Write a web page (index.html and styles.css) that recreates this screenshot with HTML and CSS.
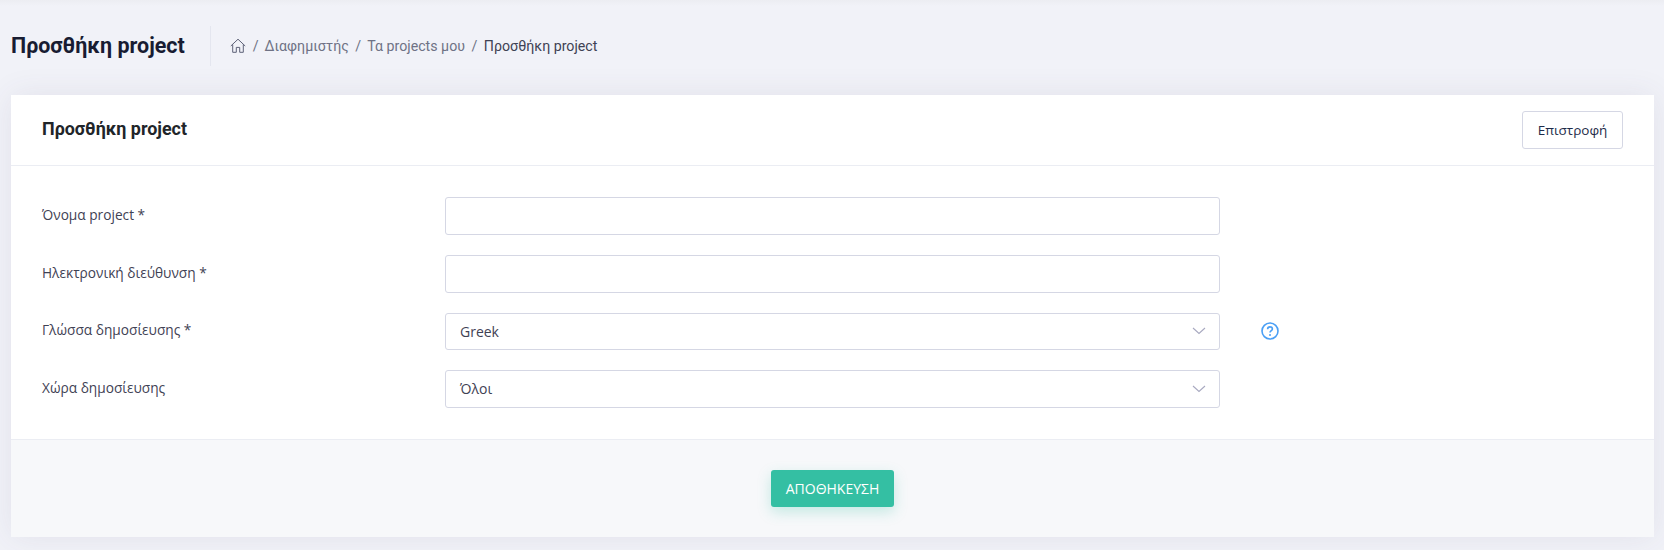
FILE: index.html
```html
<!DOCTYPE html>
<html lang="el">
<head>
<meta charset="utf-8">
<title>Προσθήκη project</title>
<link rel="stylesheet" href="styles.css">
</head>
<body>
<header class="subheader">
  <h1 class="page-title">Προσθήκη project</h1>
  <nav class="crumbs">
    <svg class="home-icon" viewBox="0 0 16 16" aria-hidden="true"><path d="M0.8 8 L8 1.2 L15.2 8 M2.7 6.4 V14.3 H6.3 V9.4 H9.7 V14.3 H13.3 V6.4"/></svg>
    <span class="sep">/</span><span class="crumb">Διαφημιστής</span>
    <span class="sep">/</span><span class="crumb">Τα projects μου</span>
    <span class="sep">/</span><span class="crumb current">Προσθήκη project</span>
  </nav>
</header>
<main class="card">
  <div class="card-head">
    <h2 class="card-title">Προσθήκη project</h2>
    <button class="btn-back" type="button">Επιστροφή</button>
  </div>
  <form class="card-body">
    <label class="field-label">Όνομα project *</label>
    <div class="control"></div>
    <span></span>
    <label class="field-label">Ηλεκτρονική διεύθυνση *</label>
    <div class="control"></div>
    <span></span>
    <label class="field-label">Γλώσσα δημοσίευσης *</label>
    <div class="control select">Greek<svg class="chevron" viewBox="0 0 14 8" aria-hidden="true"><path d="M1 1 L7 6.5 L13 1"/></svg></div>
    <svg class="help" viewBox="0 0 18 18" aria-hidden="true"><circle cx="9" cy="9" r="8"/><path d="M6.6 7.2 C6.6 5.7 7.7 4.9 9 4.9 C10.4 4.9 11.4 5.8 11.4 7 C11.4 8.6 9 8.7 9 10.6"/><circle class="dot" cx="9" cy="13" r="1"/></svg>
    <label class="field-label">Χώρα δημοσίευσης</label>
    <div class="control select">Όλοι<svg class="chevron" viewBox="0 0 14 8" aria-hidden="true"><path d="M1 1 L7 6.5 L13 1"/></svg></div>
    <span></span>
  </form>
  <div class="card-foot">
    <button class="btn-save" type="button">ΑΠΟΘΗΚΕΥΣΗ</button>
  </div>
</main>
</body>
</html>
```
FILE: styles.css
```css
* { box-sizing: border-box; }
html, body { margin: 0; height: 550px; overflow: hidden; }
body {
  background: linear-gradient(#ecedf2, #f1f2f8 6px);
  font-family: "Open Sans", sans-serif;
  font-size: 14px;
  color: #3f4254;
  padding: 0 10px 0 11px;
}
.subheader {
  height: 95px;
  display: flex;
  align-items: center;
  padding-bottom: 4px;
}
.page-title {
  margin: 0;
  font-family: Roboto, sans-serif;
  font-size: 21.45px;
  font-weight: 700;
  color: #181c32;
  padding-right: 25px;
}
.crumbs {
  height: 40px;
  border-left: 1px solid #e4e6ef;
  padding-left: 19px;
  display: flex;
  align-items: center;
  gap: 6px;
  font-family: Roboto, sans-serif;
  font-size: 14.2px;
  color: #6f7285;
}
.home-icon { width: 16px; height: 16px; fill: none; stroke: #5e6278; stroke-width: 1; margin-right: 1px; }
.crumb { margin-right: 0.5px; }
.crumb.current { color: #3f4254; margin-left: 0.5px; }
.card {
  background: #fff;
  box-shadow: 0 0 30px rgba(82, 63, 105, 0.09);
  height: 442px;
}
.card-head {
  height: 71px;
  border-bottom: 1px solid #ebedf3;
  display: flex;
  align-items: center;
  justify-content: space-between;
  padding: 0 31px;
}
.card-title {
  margin: 0 0 4px;
  font-family: Roboto, sans-serif;
  font-size: 17.9px;
  font-weight: 700;
  color: #212529;
}
.btn-back {
  width: 101px;
  height: 38px;
  background: #fff;
  border: 1px solid #d5d7e4;
  border-radius: 3px;
  font-family: "Open Sans", sans-serif;
  font-size: 13.5px;
  color: #1e2b4a;
  padding: 0;
}
.card-body {
  height: 273px;
  padding: 31.4px 0 0 31px;
  display: grid;
  grid-template-columns: 403px 775px 100px;
  grid-auto-rows: 37.6px;
  row-gap: 20px;
  align-items: center;
}
.field-label { font-size: 13.7px; color: #3f4254; padding-bottom: 3px; }
.control {
  height: 37.6px;
  border: 1px solid #d5d7e4;
  border-radius: 3px;
  background: #fff;
  font-size: 14px;
  color: #3f4254;
  padding: 0 14px;
  display: flex;
  align-items: center;
  justify-content: space-between;
}
.chevron { width: 14px; height: 8px; fill: none; stroke: #a8a9c0; stroke-width: 1.1; margin-right: -1px; }
.help { width: 18px; height: 18px; margin-left: 41px; fill: none; stroke: #4a9ff5; stroke-width: 1.6; }
.help .dot { fill: #4a9ff5; stroke: none; }
.card-foot {
  height: 98px;
  border-top: 1px solid #ebedf3;
  background: #f7f8fa;
  display: flex;
  justify-content: center;
  padding: 30px 0 0 0;
}
.btn-save {
  width: 123px;
  height: 37px;
  border: 0;
  border-radius: 3px;
  background: #34bfa3;
  color: #fff;
  font-family: "Open Sans", sans-serif;
  font-size: 14px;
  padding: 0;
  box-shadow: 0 5px 14px rgba(52, 191, 163, 0.26);
}
```
